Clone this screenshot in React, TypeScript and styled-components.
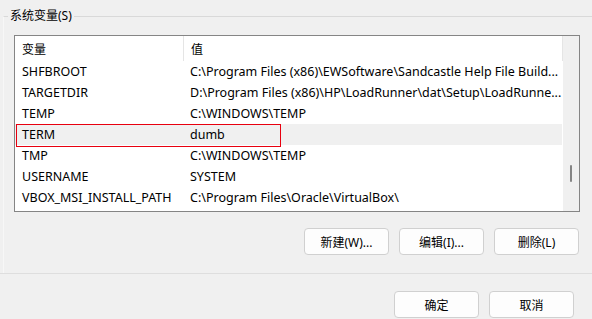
import React from 'react'
import styled, { createGlobalStyle } from 'styled-components'

const GlobalStyle = createGlobalStyle`
  html, body {
    margin: 0;
    padding: 0;
    background: #f0f0f0;
  }
  body {
    font-family: 'Noto Sans', 'Noto Sans CJK SC', sans-serif;
    font-size: 12px;
    color: #000;
  }
`

const Page = styled.div`
  width: 592px;
  height: 319px;
  padding-top: 9px;
  box-sizing: border-box;
  overflow: hidden;
`

const GroupBox = styled.fieldset`
  margin: 0 0 0 3px;
  padding: 0 13px 18px 0;
  min-inline-size: 0;
  border: none;
  border-top: 1px solid #d9d9d9;
  border-left: 1px solid #f7f7f7;
`

const Legend = styled.legend`
  margin-left: 4px;
  padding: 0 2px;
  line-height: 14px;
  font-size: 12px;
`

const ListBox = styled.div`
  position: relative;
  margin: 12px 0 0 10px;
  width: 566px;
  height: 177px;
  box-sizing: border-box;
  border: 1px solid #858585;
  background: #fff;
  display: flex;
`

const ListBody = styled.div`
  flex: 1;
  display: flex;
  flex-direction: column;
  overflow: hidden;
`

const HeaderRow = styled.div`
  display: flex;
  height: 25px;
  align-items: stretch;
`

const HeaderCell = styled.div<{ $width?: number }>`
  flex: ${(p) => (p.$width ? `0 0 ${p.$width}px` : '1')};
  display: flex;
  align-items: center;
  padding-left: 7px;
  box-sizing: border-box;
  border-right: 1px solid #e5e5e5;
  white-space: nowrap;
`

const Row = styled.div<{ $selected?: boolean }>`
  display: flex;
  height: 21px;
  align-items: center;
  margin-right: 1px;
  font-size: 12.5px;
  background: ${(p) => (p.$selected ? '#f0f0f0' : 'transparent')};
`

const Cell = styled.div<{ $width?: number }>`
  flex: ${(p) => (p.$width ? `0 0 ${p.$width}px` : '1')};
  min-width: 0;
  padding-left: 7px;
  box-sizing: border-box;
  white-space: nowrap;
  overflow: hidden;
`

const ScrollTrack = styled.div`
  flex: 0 0 16px;
  background: #f0f0f0;
  display: flex;
  justify-content: center;
  padding-top: 129px;
  box-sizing: border-box;
`

const ScrollThumb = styled.div`
  width: 2px;
  height: 17px;
  border-radius: 1px;
  background: #858585;
`

const Highlight = styled.div`
  position: absolute;
  left: 1px;
  top: 88px;
  width: 265px;
  height: 23px;
  box-sizing: border-box;
  border: 1px solid #e8000f;
  pointer-events: none;
`

const ButtonRow = styled.div<{ $right: number }>`
  display: flex;
  justify-content: flex-end;
  gap: 10px;
  padding-right: ${(p) => p.$right}px;
`

const Button = styled.button`
  width: 85px;
  height: 27px;
  box-sizing: border-box;
  border: 1px solid #d0d0d0;
  border-radius: 4px;
  background: #fdfdfd;
  font-family: inherit;
  font-size: 12px;
  color: #000;
  padding: 0;
`

const ActionRow = styled(ButtonRow)`
  margin-top: 16px;
`

const Separator = styled.div`
  height: 1px;
  background: #dedede;
`

const Footer = styled(ButtonRow)`
  margin-top: 17px;
`

const vars = [
  ['SHFBROOT', 'C:\\Program Files (x86)\\EWSoftware\\Sandcastle Help File Build...'],
  ['TARGETDIR', 'D:\\Program Files (x86)\\HP\\LoadRunner\\dat\\Setup\\LoadRunne...'],
  ['TEMP', 'C:\\WINDOWS\\TEMP'],
  ['TERM', 'dumb'],
  ['TMP', 'C:\\WINDOWS\\TEMP'],
  ['USERNAME', 'SYSTEM'],
  ['VBOX_MSI_INSTALL_PATH', 'C:\\Program Files\\Oracle\\VirtualBox\\'],
]

const App = () => {
  return (
    <>
      <GlobalStyle />
      <Page>
        <GroupBox>
          <Legend>系统变量(S)</Legend>
          <ListBox>
            <ListBody>
              <HeaderRow>
                <HeaderCell $width={169}>变量</HeaderCell>
                <HeaderCell>值</HeaderCell>
              </HeaderRow>
              {vars.map(([name, value]) => (
                <Row key={name} $selected={name === 'TERM'}>
                  <Cell $width={168}>{name}</Cell>
                  <Cell>{value}</Cell>
                </Row>
              ))}
            </ListBody>
            <ScrollTrack>
              <ScrollThumb />
            </ScrollTrack>
            <Highlight />
          </ListBox>
          <ActionRow $right={0}>
            <Button>新建(W)...</Button>
            <Button>编辑(I)...</Button>
            <Button>删除(L)</Button>
          </ActionRow>
        </GroupBox>
        <Separator />
        <Footer $right={18}>
          <Button>确定</Button>
          <Button>取消</Button>
        </Footer>
      </Page>
    </>
  )
}

export default App
